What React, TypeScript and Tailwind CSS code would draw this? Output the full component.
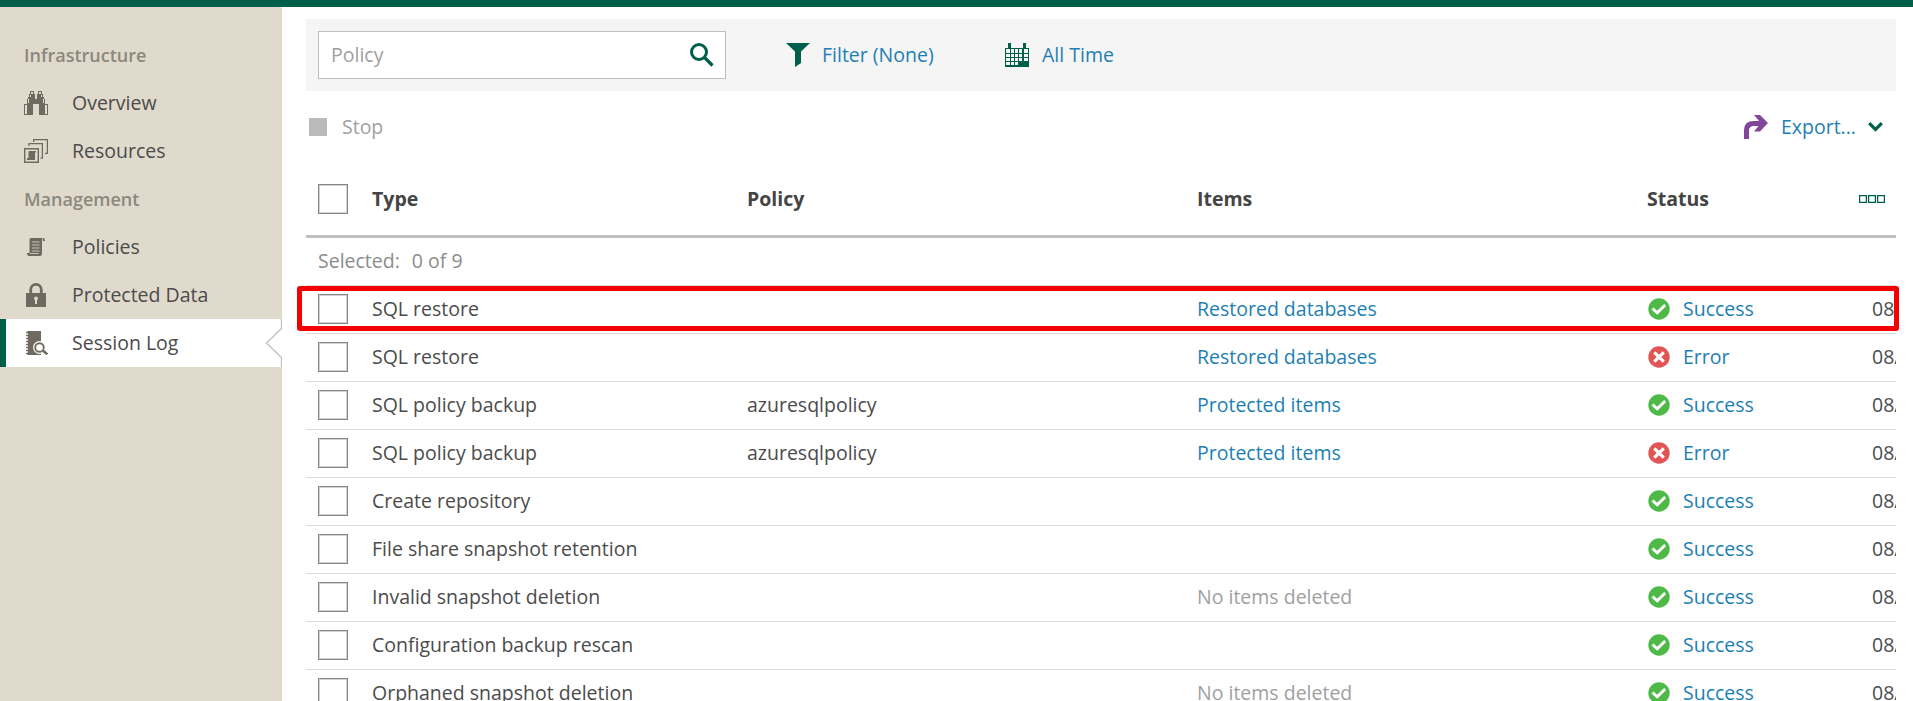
import React from "react";

const INK = "#6f6a5f";

function Binoculars() {
  return (
    <svg width="24" height="24" viewBox="0 0 24 24" fill={INK} shapeRendering="crispEdges">
      <path fillRule="evenodd" d="M6 0h4v3h1v5h2V3h1V0h4v3h1v3h1v2h1v5h3v11H15V14q0-1-1-1h-4q-1 0-1 1v10H0V13h3V8h1V6h1V3h1zM7 1v2h2V1zM15 1v2h2V1zM6 4v2h1V4zM17 4v2h1V4zM4 8v4h1V8zM19 8v4h1V8zM1 14v9h2v-9zM21 14v9h2v-9z" />
    </svg>
  );
}

function Stack() {
  return (
    <svg width="24" height="24" viewBox="0 0 24 24" fill="none" stroke={INK} strokeWidth="1.250">
      <path d="M9.600 3V.6h13.800V14.400H21M5 7V4.600h13.400V19H16.500" />
      <path d="M.7 9.700h13.600v13.600H.7z" strokeWidth="1.400" />
      <path d="M5 12h7v1.500h-1V21H3v-2h1.500V13z" fill={INK} stroke="none" />
    </svg>
  );
}

function Scroll() {
  return (
    <svg width="24" height="24" viewBox="0 0 24 24" fill={INK}>
      <path d="M7 3h12.500q1.500.5 1.500 3h-3v12.500q0 2.500-2 2.500H5q-2 0-2-3h2.500V5Q5.500 3 7 3z" />
      <path d="M8 7h7.500M8 10h7.500M8 13h7.500M8 16h7.500M6 18.500h8.500M18.500 3.500V6" stroke="#e0dacc" strokeWidth=".8" />
    </svg>
  );
}

function Lock() {
  return (
    <svg width="24" height="24" viewBox="0 0 24 24" fill={INK}>
      <path d="M6.700 11V6.700a5.300 5.300 0 0 1 10.600 0V11" fill="none" stroke={INK} strokeWidth="2.800" />
      <path d="M2 10h20v14H2z" />
      <path d="M12 13.500a2 2 0 0 1 1 3.700V21h-2v-3.800a2 2 0 0 1 1-3.700z" fill="#e0dacc" />
    </svg>
  );
}

function LogBook() {
  return (
    <svg width="24" height="24" viewBox="0 0 24 24" fill={INK}>
      <path d="M3.500 0H17v24H3.500z" />
      <path d="M2 1.500h3M2 4.500h3M2 7.500h3M2 10.500h3M2 13.500h3M2 16.500h3M2 19.500h3M2 22.500h3" stroke={INK} strokeWidth="1.300" />
      <path d="M2 3h2M2 6h2M2 9h2M2 12h2M2 15h2M2 18h2M2 21h2" stroke="#fff" strokeWidth="1.200" />
      <circle cx="15.500" cy="16.500" r="6.500" fill="#fff" />
      <circle cx="15.500" cy="16.500" r="4.300" fill="#fff" stroke={INK} strokeWidth="1.900" />
      <path d="M19 19.500l4.500 4" stroke="#fff" strokeWidth="4.500" />
      <path d="M18.500 19.300l4.800 4" stroke={INK} strokeWidth="2.500" />
    </svg>
  );
}

function NavItem({ icon, label }: { icon: React.ReactNode; label: string }) {
  return (
    <div className="flex h-12 items-center pl-6">
      {icon}
      <span className="ml-6 pb-px">{label}</span>
    </div>
  );
}

function StatusIcon({ ok }: { ok: boolean }) {
  return (
    <svg className="ml-px mt-px" width="22" height="22" viewBox="0 0 22 22" fill="none" stroke="#fff">
      <circle cx="11" cy="11" r="10.700" fill={ok ? "#4fb948" : "#e15554"} stroke="none" />
      {ok ? (
        <path d="M4.500 10.500l4.700 4.300L17.200 7" strokeWidth="3" />
      ) : (
        <path d="M6.300 6.300l9.400 9.400M15.700 6.300l-9.400 9.400" strokeWidth="3.200" />
      )}
    </svg>
  );
}

const Checkbox = ({ className }: { className: string }) => (
  <span className={`${className} size-[30px] self-start border border-[#868686] bg-white shadow-[inset_0_0_0_1px_#d2d2d2]`} />
);

const COLS = "grid grid-cols-[54px_375px_450px_450px_225px_1fr] pl-3";

type Row = { type: string; policy?: string; items?: string; muted?: boolean; ok: boolean };

const rows: Row[] = [
  { type: "SQL restore", items: "Restored databases", ok: true },
  { type: "SQL restore", items: "Restored databases", ok: false },
  { type: "SQL policy backup", policy: "azuresqlpolicy", items: "Protected items", ok: true },
  { type: "SQL policy backup", policy: "azuresqlpolicy", items: "Protected items", ok: false },
  { type: "Create repository", ok: true },
  { type: "File share snapshot retention", ok: true },
  { type: "Invalid snapshot deletion", items: "No items deleted", muted: true, ok: true },
  { type: "Configuration backup rescan", ok: true },
  { type: "Orphaned snapshot deletion", items: "No items deleted", muted: true, ok: true },
];

export default function App() {
  return (
    <div className="flex h-[701px] w-full flex-col overflow-hidden bg-white font-['Open_Sans','Noto_Sans',sans-serif] text-[19.500px] leading-[27px] text-[#4b4b4b]">
      <div className="h-[7px] shrink-0 bg-[#005f4b]" />
      <div className="flex min-h-0 flex-1">
        <nav className="w-[282px] shrink-0 rounded-tr-[2px] bg-[#e0dacc] pt-6">
          <div className="flex h-12 items-center pl-6 text-[18px] font-semibold text-[#8b887d]">Infrastructure</div>
          <NavItem icon={<Binoculars />} label="Overview" />
          <NavItem icon={<Stack />} label="Resources" />
          <div className="flex h-12 items-center pl-6 text-[18px] font-semibold text-[#8b887d]">Management</div>
          <NavItem icon={<Scroll />} label="Policies" />
          <NavItem icon={<Lock />} label="Protected Data" />
          <div className="flex h-12 items-center border-l-[6px] border-[#005f4b] bg-white pl-[18px]">
            <LogBook />
            <span className="ml-6 pb-px">Session Log</span>
            <svg className="ml-auto" width="17" height="48" viewBox="0 0 17 48" fill="none" stroke="#c0c0c0" strokeWidth="1.300">
              <path d="M16.500 0v9.500L1.500 24l15 14.500V48" />
            </svg>
          </div>
        </nav>

        <main className="ml-6 mr-[17px] min-w-0 flex-1 pt-3">
          <div className="flex h-[72px] items-center bg-[#f5f5f5] pl-3 text-[#1d7fb4]">
            <div className="flex h-12 w-[408px] items-center justify-between border border-[#bebebe] bg-white pl-3 pr-[11px] text-[#a0a0a0]">
              <span className="pb-px">Policy</span>
              <svg width="24" height="24" viewBox="0 0 24 24" fill="none" stroke="#005f4b">
                <circle cx="9" cy="9" r="7.500" strokeWidth="3" />
                <path d="M14.500 14.500l8 8" strokeWidth="3.200" />
              </svg>
            </div>
            <svg className="ml-[60px]" width="24" height="24" viewBox="0 0 24 24" fill="#005f4b">
              <path d="M0 0h24l-9 8.500V20l-6 4V8.500z" />
            </svg>
            <span className="ml-3 w-[183px] pb-px">Filter (None)</span>
            <svg width="24" height="24" viewBox="0 0 24 24" fill="#005f4b" shapeRendering="crispEdges">
              <path d="M3 0h3v5H3zM18 0h3v5h-3zM0 5h24v19H0z" />
              {[6, 11, 15, 19].map((y, r) =>
                [1, 6, 10, 14, 19].map((x, c) =>
                  r === 3 && c > 2 ? null : (
                    <rect key={`${x}-${y}`} x={x} y={y} width={c === 0 || c === 4 ? 4 : 3} height={r === 0 ? 4 : 3} fill="#f5f5f5" />
                  )
                )
              )}
            </svg>
            <span className="ml-[13px] pb-px">All Time</span>
          </div>

          <div className="flex h-[72px] items-center pl-[3px] pr-[13px] text-[#1d7fb4]">
            <span className="size-[18px] bg-[#bababa]" />
            <span className="ml-[15px] flex-1 pb-px text-[#a0a0a0]">Stop</span>
            <svg width="24" height="24" viewBox="0 0 24 24" fill="#81479a">
              <path d="M0 24V15Q0 6 10 6h5L10 0h6l8 8-8 8.500h-6L14.500 11H10q-5 0-5 4.500V24z" />
            </svg>
            <span className="ml-[13px] w-[87px] pb-px">Export...</span>
            <svg width="15" height="10" viewBox="0 0 15 10" fill="none" stroke="#005f4b" strokeWidth="3.200">
              <path d="M1.200 1.200l6.300 6.300 6.300-6.300" />
            </svg>
          </div>

          <div className={`${COLS} h-[75px] items-center border-b-[3px] border-[#bfbfbf] font-bold text-[#444]`}>
            <Checkbox className="mt-[21px]" />
            <span className="pb-px">Type</span>
            <span className="pb-px">Policy</span>
            <span className="pb-px">Items</span>
            <span className="pb-px">Status</span>
            <svg className="-ml-[13px]" width="26" height="8" viewBox="0 0 26 8" fill="none" stroke="#005f4b" strokeWidth="1.300">
              <path d="M.6.6h6.800v6.800H.6zM9.600.6h6.800v6.800H9.600zM18.600.6h6.800v6.800h-6.800z" />
            </svg>
          </div>

          <div className="relative">
            <div className="flex h-12 items-center gap-3 border-b border-[#dadada] pb-[2px] pl-3 text-[#8c8c8c]">
              <span>Selected:</span>
              <span>0 of 9</span>
            </div>
            {rows.map((r, i) => (
              <div key={i} className={`${COLS} h-12 items-center overflow-hidden border-b border-[#dadada] pb-[2px]`}>
                <Checkbox className="mt-2" />
                <span>{r.type}</span>
                <span>{r.policy}</span>
                <span className={r.muted ? "text-[#a0a0a0]" : "text-[#1d7fb4]"}>{r.items}</span>
                <span className="flex items-center gap-[13px] text-[#1d7fb4]">
                  <StatusIcon ok={r.ok} />
                  {r.ok ? "Success" : "Error"}
                </span>
                <span className="overflow-hidden">08/</span>
              </div>
            ))}
            <div className="absolute -left-[9px] -right-[3px] top-12 h-[45px] rounded-[3px] border-[5px] border-[#f50000]" />
          </div>
        </main>
      </div>
    </div>
  );
}
